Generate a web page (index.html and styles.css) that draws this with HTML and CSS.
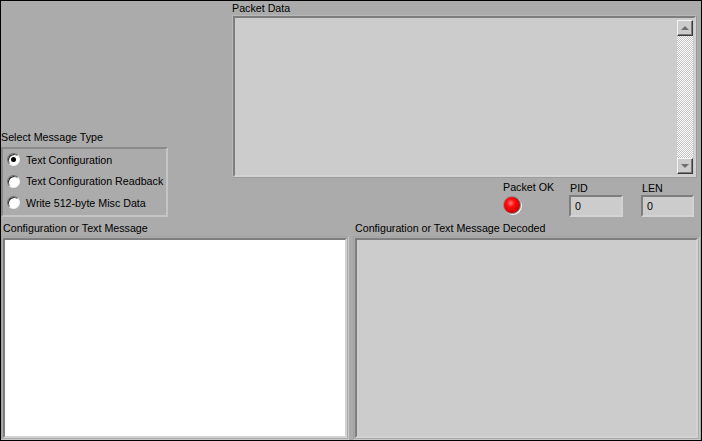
FILE: index.html
```html
<!DOCTYPE html>
<html lang="en">
<head>
    <meta charset="UTF-8">
    <title>Packet Decoder</title>
    <link rel="stylesheet" href="styles.css">
</head>
<body>
    <div class="panel">
        <div class="top">
            <!-- message type selector -->
            <div class="msg-type">
                <div class="label">Select Message Type</div>
                <div class="radio-box">
                    <div class="radio-row"><span class="radio checked"></span>Text Configuration</div>
                    <div class="radio-row"><span class="radio"></span>Text Configuration Readback</div>
                    <div class="radio-row"><span class="radio"></span>Write 512-byte Misc Data</div>
                </div>
            </div>

            <div class="packet">
                <div class="label">Packet Data</div>
                <div class="frame packet-frame">
                    <div class="well grey packet-well">
                        <div class="packet-text"></div>
                        <div class="scrollbar">
                            <div class="scroll-btn"><span class="arrow up"></span></div>
                            <div class="scroll-track"></div>
                            <div class="scroll-btn"><span class="arrow down"></span></div>
                        </div>
                    </div>
                </div>

                <div class="status-row">
                    <div class="led-group">
                        <div class="label">Packet OK</div>
                        <div class="led"></div>
                    </div>
                    <div class="num-group pid">
                        <div class="label">PID</div>
                        <div class="num-box">0</div>
                    </div>
                    <div class="num-group len">
                        <div class="label">LEN</div>
                        <div class="num-box">0</div>
                    </div>
                </div>
            </div>
        </div>

        <div class="bottom">
            <div class="col">
                <div class="label">Configuration or Text Message</div>
                <div class="frame msg-frame">
                    <div class="well white"></div>
                </div>
            </div>
            <div class="col">
                <div class="label">Configuration or Text Message Decoded</div>
                <div class="frame msg-frame">
                    <div class="well grey"></div>
                </div>
            </div>
        </div>
    </div>
</body>
</html>
```

FILE: styles.css
```css
:root {
    --panel: #ababab;
    --well: #cccccc;
    --dark-edge: #7e7e7e;
    --light-edge: #d2d2d2;
}

body {
    margin: 0;
    font-family: 'Liberation Sans', Arial, sans-serif;
    font-size: 10.7px;
    color: #000;
}

.panel {
    width: 702px;
    height: 441px;
    box-sizing: border-box;
    border: 1px solid #000;
    background: var(--panel);
    display: flex;
    flex-direction: column;
}

.label {
    line-height: 13px;
    height: 13px;
    white-space: nowrap;
}

.top {
    height: 221px;
    display: flex;
    flex-shrink: 0;
}

/* select message type */
.msg-type {
    width: 167px;
    align-self: flex-end;
    margin-bottom: 5px;
}

.msg-type .label {
    margin-bottom: 3px;
}

.radio-box {
    height: 70px;
    box-sizing: border-box;
    border: 2px solid;
    border-color: #8a8a8a #c4c4c4 #c4c4c4 #8a8a8a;
    padding-left: 4px;
    overflow: hidden;
}

.radio-row {
    height: 21.5px;
    display: flex;
    align-items: center;
    white-space: nowrap;
}

.radio {
    flex-shrink: 0;
    width: 13px;
    height: 13px;
    box-sizing: border-box;
    border-radius: 50%;
    border: 1px solid;
    border-color: #6c6c6c #f2f2f2 #f2f2f2 #6c6c6c;
    box-shadow: inset 1px 1px 0 #2c2c2c;
    background: #fff;
    margin-right: 6px;
    position: relative;
}

.radio.checked::after {
    content: '';
    position: absolute;
    left: 3px;
    top: 3px;
    width: 5px;
    height: 5px;
    border-radius: 50%;
    background: #000;
}

/* packet data */
.packet {
    margin-left: 64px;
    padding-top: 1px;
}

.frame {
    box-sizing: border-box;
    border: 1px solid;
    border-color: #b9b9b9 #9c9c9c #9c9c9c #b9b9b9;
    display: flex;
}

.well {
    flex: 1;
    border: 2px solid;
    border-color: var(--dark-edge) var(--light-edge) var(--light-edge) var(--dark-edge);
}

.well.grey {
    background: var(--well);
}

.well.white {
    background: #fff;
}

.packet-frame {
    width: 465px;
    height: 163px;
}

.packet-well {
    display: flex;
}

.packet-text {
    flex: 1;
}

.scrollbar {
    width: 16px;
    margin: 2px 1px 1px 0;
    display: flex;
    flex-direction: column;
}

.scroll-btn {
    height: 16px;
    box-sizing: border-box;
    background: var(--well);
    border: 1px solid;
    border-color: #f4f4f4 #3c3c3c #3c3c3c #f4f4f4;
    box-shadow: inset -1px -1px 0 #7a7a7a;
    display: flex;
    align-items: center;
    justify-content: center;
}

.arrow {
    width: 0;
    height: 0;
    border-left: 4px solid transparent;
    border-right: 4px solid transparent;
}

.arrow.up {
    border-bottom: 4px solid #6e6e6e;
}

.arrow.down {
    border-top: 4px solid #6e6e6e;
}

.scroll-track {
    flex: 1;
    background: repeating-conic-gradient(#ffffff 0 25%, #c4c4c4 0 50%) 0 0 / 2px 2px;
}

/* status indicators */
.status-row {
    display: flex;
    padding-top: 3px;
}

.led-group {
    margin-left: 271px;
    width: 66px;
}

.led {
    margin-top: 2px;
    width: 18px;
    height: 18px;
    box-sizing: border-box;
    border-radius: 50%;
    border: 1px solid #8c8c8c;
    background: radial-gradient(circle at 42% 38%, #ff7a7a 0, #ff1010 28%, #e00000 60%, #a00000 100%);
    box-shadow: 1px 1px 0 #f4f4f4;
}

.num-group {
    padding-top: 1px;
}

.num-group .label {
    padding-left: 1px;
}

.pid {
    width: 72px;
}

.len {
    width: 53px;
}

.num-box {
    width: 54px;
    height: 22px;
    box-sizing: border-box;
    border: 2px solid;
    border-color: var(--dark-edge) var(--light-edge) var(--light-edge) var(--dark-edge);
    background: var(--well);
    line-height: 18px;
    padding-left: 4px;
}

.len .num-box {
    width: 53px;
}

/* message boxes */
.bottom {
    flex: 1;
    display: flex;
    gap: 4px;
}

.col {
    width: 348px;
    display: flex;
    flex-direction: column;
}

.col:last-child {
    width: 347px;
}

.col .label {
    padding-left: 2px;
    margin-bottom: 1px;
}

.msg-frame {
    flex: 1;
    border-color: #a2a2a2 #c8c8c8 #c8c8c8 #a2a2a2;
    padding: 1px;
}
```
